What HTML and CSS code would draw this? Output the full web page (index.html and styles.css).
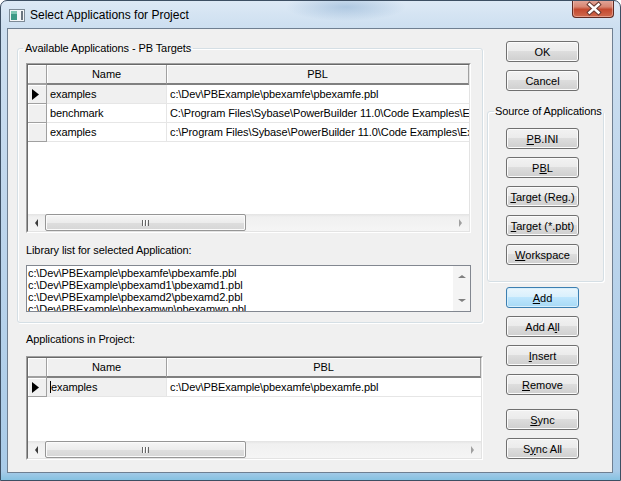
FILE: index.html
```html
<!DOCTYPE html>
<html lang="en">
<head>
  <meta charset="UTF-8">
  <title>Select Applications for Project</title>
  <link rel="stylesheet" href="styles.css">
</head>
<body>

  <div class="window">
    <!-- Title bar -->
    <div class="titlebar">
      <svg class="app-icon" width="16" height="13" viewBox="0 0 16 13">
        <rect x="0.5" y="0.5" width="15" height="12" fill="#f4f6f8" stroke="#7d8a96"/>
        <rect x="2" y="2" width="6" height="9" fill="#3f9a86"/>
        <rect x="2" y="2" width="6" height="3" fill="#7fc6b2"/>
        <rect x="12" y="2" width="2" height="9" fill="#6b7580"/>
      </svg>
      <span class="title">Select Applications for Project</span>
      <div class="close-btn">
        <svg width="42" height="17" viewBox="0 0 42 17">
          <path d="M16.5 4.5 L25.5 12.5 M25.5 4.5 L16.5 12.5" stroke="#6a3a32" stroke-width="4.5" stroke-linecap="square"/>
          <path d="M16.5 4.5 L25.5 12.5 M25.5 4.5 L16.5 12.5" stroke="#fff" stroke-width="2.5" stroke-linecap="square"/>
        </svg>
      </div>
    </div>

    <div class="client">
      <div class="main">
        <fieldset class="group targets">
          <legend>Available Applications - PB Targets</legend>

          <div class="grid grid-targets">
            <div class="grid-inner">
              <div class="grid-head">
                <div class="hcell"></div>
                <div class="hcell">Name</div>
                <div class="hcell">PBL</div>
              </div>
              <div class="grid-body">
                <div class="grid-row">
                  <div class="ind"><svg width="7" height="11" viewBox="0 0 7 11"><polygon points="0,0 7,5.5 0,11" fill="#000"/></svg></div>
                  <div class="cell name current">examples</div>
                  <div class="cell">c:\Dev\PBExample\pbexamfe\pbexamfe.pbl</div>
                </div>
                <div class="grid-row">
                  <div class="ind"></div>
                  <div class="cell name">benchmark</div>
                  <div class="cell">C:\Program Files\Sybase\PowerBuilder 11.0\Code Examples\Example App\benchmark.pbl</div>
                </div>
                <div class="grid-row">
                  <div class="ind"></div>
                  <div class="cell name">examples</div>
                  <div class="cell">c:\Program Files\Sybase\PowerBuilder 11.0\Code Examples\Example App\pbexamfe.pbl</div>
                </div>
              </div>
              <div class="hscroll">
                <div class="sb-btn"><span class="arrow left"></span></div>
                <div class="thumb"><span class="grip"></span></div>
                <div class="track"></div>
                <div class="sb-btn"><span class="arrow right"></span></div>
              </div>
            </div>
          </div>

          <div class="label lib-label">Library list for selected Application:</div>

          <div class="listbox">
            <div class="list-lines">
              <div>c:\Dev\PBExample\pbexamfe\pbexamfe.pbl</div>
              <div>c:\Dev\PBExample\pbexamd1\pbexamd1.pbl</div>
              <div>c:\Dev\PBExample\pbexamd2\pbexamd2.pbl</div>
              <div>c:\Dev\PBExample\pbexamwn\pbexamwn.pbl</div>
            </div>
            <div class="vscroll">
              <div class="sb-btn"><span class="arrow up"></span></div>
              <div class="sb-btn"><span class="arrow down"></span></div>
            </div>
          </div>
        </fieldset>

        <div class="project">
          <div class="label">Applications in Project:</div>
          <div class="grid grid-project">
            <div class="grid-inner">
              <div class="grid-head">
                <div class="hcell"></div>
                <div class="hcell">Name</div>
                <div class="hcell">PBL</div>
              </div>
              <div class="grid-body">
                <div class="grid-row">
                  <div class="ind"><svg width="7" height="11" viewBox="0 0 7 11"><polygon points="0,0 7,5.5 0,11" fill="#000"/></svg></div>
                  <div class="cell name current"><span class="caret"></span>examples</div>
                  <div class="cell">c:\Dev\PBExample\pbexamfe\pbexamfe.pbl</div>
                </div>
              </div>
              <div class="hscroll">
                <div class="sb-btn"><span class="arrow left"></span></div>
                <div class="thumb"><span class="grip"></span></div>
                <div class="track"></div>
                <div class="sb-btn"><span class="arrow right"></span></div>
              </div>
            </div>
          </div>
        </div>
      </div>

      <!-- Buttons -->
      <div class="side">
        <button class="btn btn-ok">OK</button>
        <button class="btn">Cancel</button>

        <fieldset class="group source">
          <legend>Source of Applications</legend>
          <button class="btn"><u>P</u>B.INI</button>
          <button class="btn">P<u>B</u>L</button>
          <button class="btn"><u>T</u>arget (Reg.)</button>
          <button class="btn"><u>T</u>arget (*.pbt)</button>
          <button class="btn"><u>W</u>orkspace</button>
        </fieldset>

        <button class="btn default btn-add"><u>A</u>dd</button>
        <button class="btn">Add A<u>l</u>l</button>
        <button class="btn"><u>I</u>nsert</button>
        <button class="btn"><u>R</u>emove</button>
        <button class="btn btn-sync"><u>S</u>ync</button>
        <button class="btn">S<u>y</u>nc All</button>
      </div>
    </div>
  </div>

</body>
</html>
```

FILE: styles.css
```css
body {
  margin: 0;
  padding: 0;
  background-color: #fff;
  font-family: "Liberation Sans", Arial, sans-serif;
}

/* Window frame */
.window {
  width: 621px;
  height: 481px;
  box-sizing: border-box;
  border: 1px solid #3d4f63;
  border-radius: 7px 7px 0 0;
  overflow: hidden;
  background:
    radial-gradient(ellipse 60px 14px at 345px 6px, rgba(140, 175, 210, 0.55), rgba(140, 175, 210, 0)),
    linear-gradient(180deg, #dde9f5 0px, #cddff0 26px, #bfd6ec 200px, #a9cbe8 470px, #7fc0e0 481px);
  display: flex;
  flex-direction: column;
}

.titlebar {
  height: 27px;
  display: flex;
  align-items: center;
  padding-left: 8px;
}

.app-icon {
  margin-right: 5px;
  margin-top: 1px;
}

.title {
  font-size: 12px;
  color: #000;
  margin-top: 1px;
}

.close-btn {
  align-self: flex-start;
  margin-left: auto;
  margin-right: 6px;
  margin-top: -1px;
  width: 42px;
  height: 18px;
  box-sizing: border-box;
  border: 1px solid #5f2a22;
  border-top: none;
  border-radius: 0 0 4px 4px;
  background: linear-gradient(180deg, #e3a89c 0%, #d88672 40%, #c4492f 55%, #cf6a4e 100%);
  box-shadow: inset 0 0 0 1px rgba(255, 220, 210, 0.45);
}

.close-btn svg {
  display: block;
}

/* Client area */
.client {
  width: 606px;
  height: 445px;
  box-sizing: border-box;
  margin-left: 6px;
  border: 1px solid #6f7f91;
  background-color: #f0f0f0;
  display: flex;
  font-size: 11px;
  letter-spacing: -0.1px;
  color: #000;
}

.main {
  width: 475px;
  padding-left: 9px;
  padding-top: 13px;
  box-sizing: border-box;
}

.group {
  margin: 0;
  border: 1px solid #d5dfe5;
  border-radius: 3px;
  box-shadow: inset 1px 1px 0 #fff, 1px 1px 0 #fff;
  min-width: 0;
}

.group legend {
  line-height: 13px;
  white-space: nowrap;
}

.targets {
  width: 466px;
  box-sizing: border-box;
  padding: 8px 11px 10px 8px;
}

.targets legend {
  padding: 0 2px;
  margin-left: -3px;
}

/* Data grid */
.grid {
  box-sizing: border-box;
  border: 1px solid;
  border-color: #a0a0a0 #fff #fff #a0a0a0;
}

.grid-targets {
  height: 170px;
}

.grid-project {
  height: 104px;
}

.grid-inner {
  height: 100%;
  box-sizing: border-box;
  border: 1px solid;
  border-color: #696969 #e3e3e3 #e3e3e3 #696969;
  background-color: #fff;
  display: flex;
  flex-direction: column;
}

.grid-head,
.grid-row {
  display: grid;
  grid-template-columns: 19px 120px 1fr;
}

.grid-head {
  height: 20px;
  flex: none;
}

.hcell {
  background-color: #f0f0f0;
  border-right: 1px solid #a0a0a0;
  border-bottom: 2px solid #808080;
  box-shadow: inset 1px 1px 0 #fff;
  text-align: center;
  line-height: 18px;
}

.hcell:first-child {
  border-bottom-color: #a0a0a0;
}

.grid-body {
  flex: 1;
  overflow: hidden;
}

.grid-row {
  height: 19px;
}

.ind {
  background-color: #f0f0f0;
  border-right: 1px solid #a0a0a0;
  border-bottom: 1px solid #a0a0a0;
  box-shadow: inset 1px 1px 0 #fff;
  display: flex;
  align-items: center;
  padding-left: 4px;
}

.cell {
  padding-left: 3px;
  line-height: 18px;
  border-bottom: 1px solid #e6e6e6;
  white-space: nowrap;
  overflow: hidden;
}

.cell.name {
  border-right: 1px solid #e6e6e6;
}

.cell.current {
  background-color: #f0f0f0;
}

.caret {
  display: inline-block;
  width: 1px;
  height: 12px;
  background-color: #000;
  vertical-align: -2px;
}

/* Scroll bars */
.hscroll {
  height: 17px;
  flex: none;
  display: flex;
  background: linear-gradient(180deg, #e3e3e3 0, #f0f0f0 3px, #f5f5f5 100%);
}

.sb-btn {
  width: 17px;
  height: 17px;
  display: flex;
  align-items: center;
  justify-content: center;
  flex: none;
}

.thumb {
  width: 201px;
  box-sizing: border-box;
  border: 1px solid #969696;
  border-radius: 2px;
  background: linear-gradient(180deg, #f6f6f6 0%, #ececec 50%, #dedede 51%, #d6d6d6 100%);
  box-shadow: inset 0 0 0 1px #fbfbfb;
  display: flex;
  align-items: center;
  justify-content: center;
}

.grip {
  width: 7px;
  height: 6px;
  background: repeating-linear-gradient(90deg, #666 0 1px, #fff 1px 2px, transparent 2px 3px);
}

.track {
  flex: 1;
}

.arrow {
  width: 0;
  height: 0;
  border: 4px solid transparent;
}

.arrow.left {
  border-left-width: 0;
  border-right: 3px solid #3c3c3c;
}

.arrow.right {
  border-right-width: 0;
  border-left: 3px solid #a0a0a0;
}

.arrow.up {
  border-top-width: 0;
  border-bottom: 3px solid #808080;
}

.arrow.down {
  border-bottom-width: 0;
  border-top: 3px solid #808080;
}

/* Labels and list box */
.label {
  line-height: 13px;
  white-space: nowrap;
}

.lib-label {
  margin-top: 11px;
  margin-bottom: 8px;
}

.listbox {
  height: 47px;
  box-sizing: border-box;
  border: 1px solid #828790;
  background-color: #fff;
  display: flex;
}

.list-lines {
  flex: 1;
  overflow: hidden;
  padding-top: 1px;
  padding-left: 1px;
  line-height: 12px;
  white-space: nowrap;
}

.vscroll {
  width: 17px;
  display: flex;
  flex-direction: column;
  justify-content: space-between;
  background-color: #f4f4f4;
  padding: 2px 0;
}

.project {
  padding-left: 9px;
  padding-top: 10px;
}

.project .label {
  margin-bottom: 10px;
}

/* Button column */
.side {
  width: 118px;
  margin-left: 4px;
  display: flex;
  flex-direction: column;
}

.btn {
  width: 73px;
  height: 21px;
  margin-left: 19px;
  margin-top: 8px;
  padding: 0;
  box-sizing: border-box;
  font: inherit;
  color: #000;
  border: 1px solid #707070;
  border-radius: 3px;
  background: linear-gradient(180deg, #f2f2f2 0%, #ebebeb 48%, #dddddd 50%, #cfcfcf 100%);
  box-shadow: inset 0 0 0 1px #fbfbfb;
  flex: none;
}

.btn u {
  text-underline-offset: 1px;
}

.btn.default {
  border-color: #3c7fb1;
  background: linear-gradient(180deg, #eaf6fd 0%, #d9f0fc 48%, #bee6fd 50%, #a7d9f5 100%);
  box-shadow: inset 0 0 0 1px #d8effc;
}

.btn-ok {
  margin-top: 12px;
}

.source {
  width: 117px;
  box-sizing: border-box;
  margin-top: 14px;
  padding: 2px 0 16px 6px;
  display: flex;
  flex-direction: column;
}

.source legend {
  padding: 0 1px;
  margin-left: 0;
}

.source .btn {
  margin-left: 12px;
}

.btn-add {
  margin-top: 5px;
}

.btn-sync {
  margin-top: 14px;
}
```
